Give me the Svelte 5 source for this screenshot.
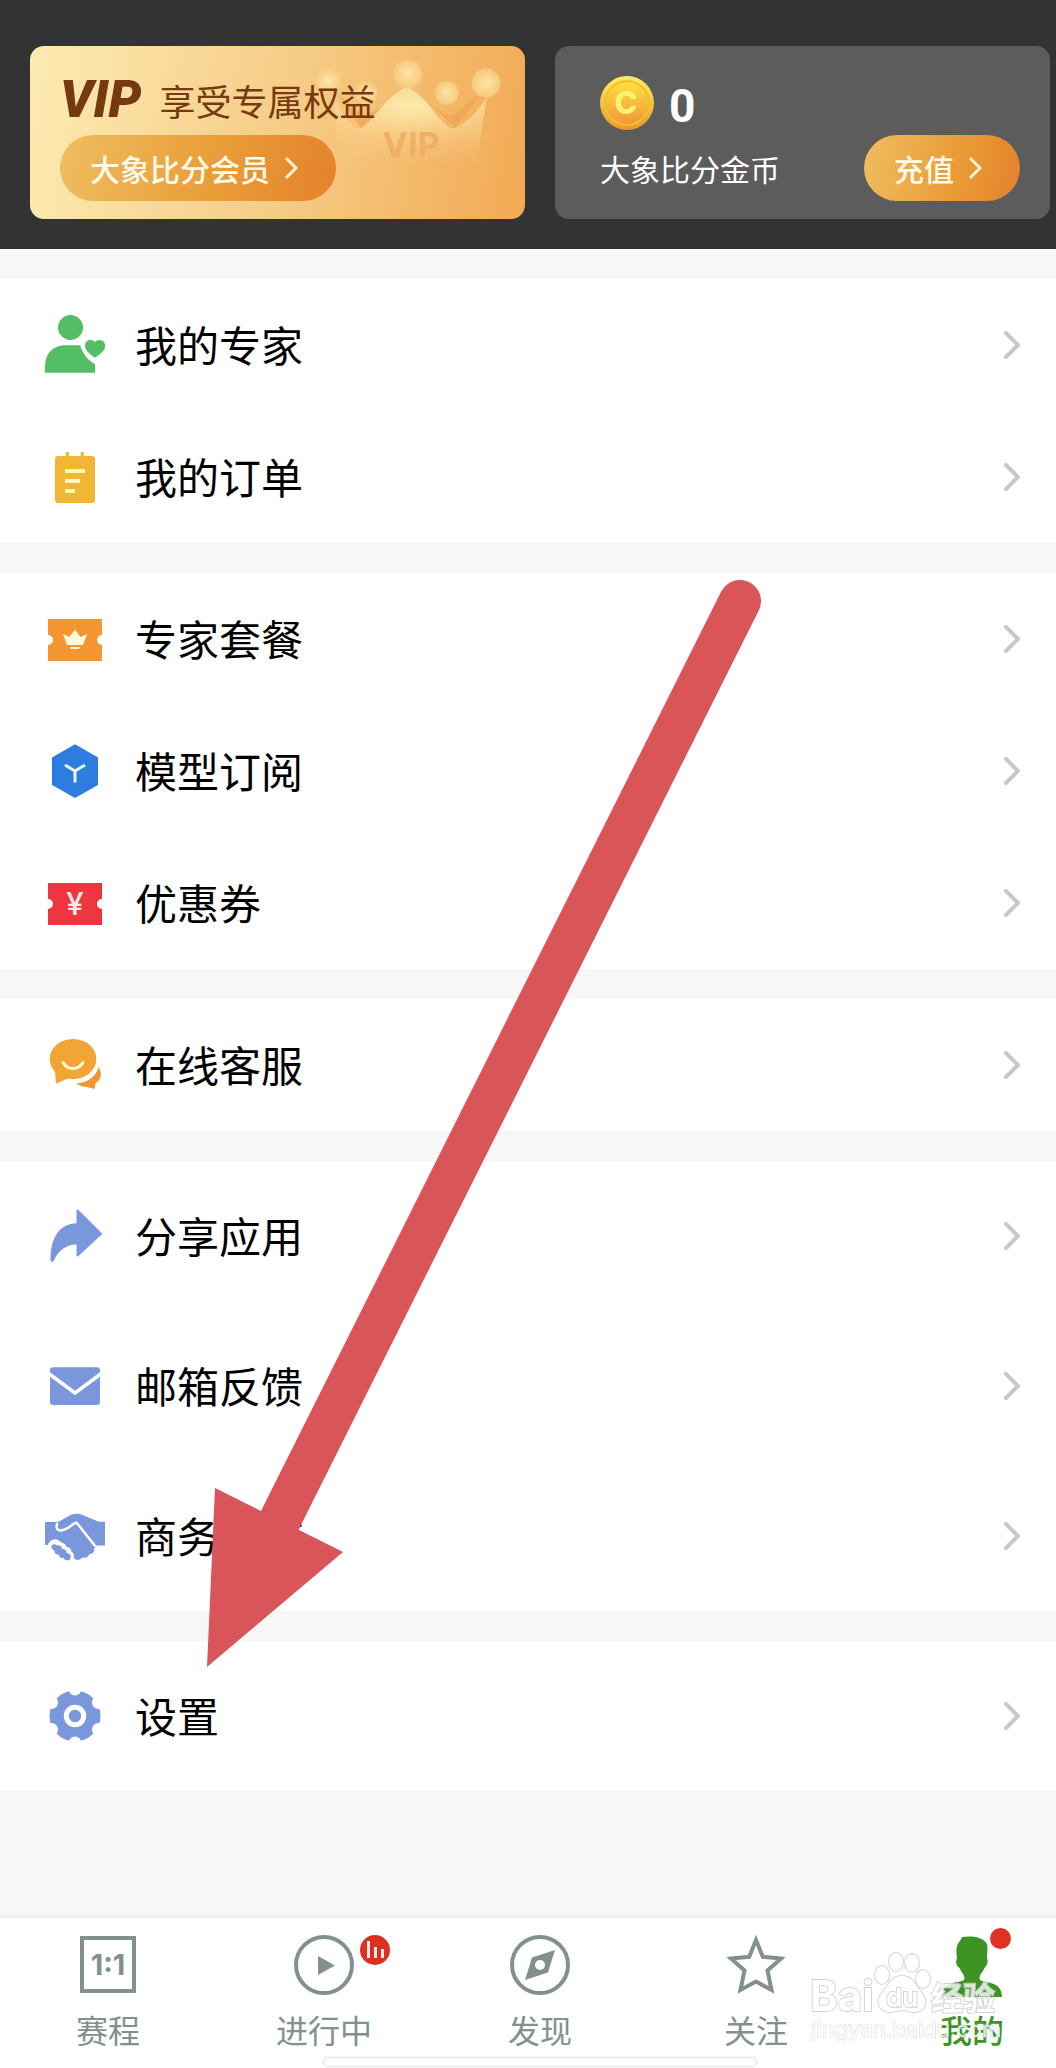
<script lang="ts">
    type Item = { icon: string; label: string };

    const groups: { items: Item[]; tall?: boolean }[] = [
        {
            items: [
                { icon: "expert", label: "我的专家" },
                { icon: "order", label: "我的订单" }
            ]
        },
        {
            items: [
                { icon: "package", label: "专家套餐" },
                { icon: "model", label: "模型订阅" },
                { icon: "coupon", label: "优惠券" }
            ]
        },
        { items: [{ icon: "service", label: "在线客服" }] },
        {
            tall: true,
            items: [
                { icon: "share", label: "分享应用" },
                { icon: "mail", label: "邮箱反馈" },
                { icon: "business", label: "商务合作" }
            ]
        },
        { tall: true, items: [{ icon: "settings", label: "设置" }] }
    ];

    const tabs: Item[] = [
        { icon: "schedule", label: "赛程" },
        { icon: "live", label: "进行中" },
        { icon: "discover", label: "发现" },
        { icon: "follow", label: "关注" },
        { icon: "mine", label: "我的" }
    ];

    let active = $state("mine");

    // gaps between the teeth of the settings gear
    const notches = [30, 90, 150, 210, 270, 330].map((deg) => ({
        x: 30 + 27 * Math.cos((deg * Math.PI) / 180),
        y: 30 + 27 * Math.sin((deg * Math.PI) / 180)
    }));
</script>

{#snippet pillArrow()}
    <svg class="pill-arrow" viewBox="0 0 14 24" aria-hidden="true">
        <path d="M2 2 L12 12 L2 22" fill="none" stroke="#fff3d2" stroke-width="3" />
    </svg>
{/snippet}

{#snippet rowIcon(name: string)}
    <svg class="row-icon" viewBox="0 0 60 60" aria-hidden="true">
        {#if name === "expert"}
            <g fill="#53be63">
                <circle cx="25.5" cy="12.5" r="12.5" />
                <path d="M0 57.7 V52 C0 38 8 30.3 21 30.3 H35 C38 39 43 46 50 49 V57.7 Z" />
                <path d="M50 42.7 C45 39.5 40 35.5 40 31 C40 24.5 47 23.5 50 27 C53 23.5 60.3 24.5 60.3 31 C60.3 35.5 55 39.5 50 42.7 Z" />
            </g>
        {:else if name === "order"}
            <rect x="10" y="9" width="40" height="47" rx="3" fill="#f1b734" />
            <path d="M22.3 5 V10 M37.3 5 V10" stroke="#f1b734" stroke-width="3" />
            <path d="M20 24 H40 M20 34 H35 M20 44 H30" stroke="#fffabb" stroke-width="4" />
        {:else if name === "package"}
            <path d="M3 10 H57 V26 A5 5 0 0 0 57 36 V52 H3 V36 A5 5 0 0 0 3 26 Z" fill="#f39630" />
            <path d="M18 25 L24.5 28 L30 20.5 L35.5 28 L42 25 L38 36 H22 Z M25 38 H35 L34 40 H26 Z" fill="#fffbe0" />
        {:else if name === "model"}
            <path d="M30 3.3 L53 16.5 V44 L30 57 L7 44 V16.5 Z" fill="#2d7de0" />
            <path d="M20 24 L30 30 L40 24 M30 30 V41.5" fill="none" stroke="#e6fbff" stroke-width="3" />
        {:else if name === "coupon"}
            <path d="M3 10 H57 V26 A5 5 0 0 0 57 36 V52 H3 V36 A5 5 0 0 0 3 26 Z" fill="#ee3640" />
            <text x="30" y="42" text-anchor="middle" font-size="31" font-weight="500" fill="#ffe9e4">¥</text>
        {:else if name === "service"}
            <g fill="#f2a435">
                <ellipse cx="28" cy="24" rx="23.3" ry="20" />
                <path d="M10 36 L11 48.5 L24 43 Z" />
                <path d="M53.5 32 C57 37 57 44 50.5 48.5 L49.5 54 L42 52 C38 51.5 34 51 31.5 48.5 C42 48 51 42 53.5 32 Z" fill="#ee962f" />
            </g>
            <path d="M18 27.5 C22.5 35.5 33.5 35.5 38 27.5" fill="none" stroke="#fffbd2" stroke-width="3" stroke-linecap="round" />
        {:else if name === "share"}
            <path
                d="M32.5 4.5 L56 27.7 L32.5 49.5 V37.5 C21 36.5 12 45 8 54 C7 55.5 6.5 55 6.5 53 C6 32 16 18 32.5 18 Z"
                fill="#7b97db"
                stroke="#7b97db"
                stroke-width="2"
                stroke-linejoin="round"
            />
        {:else if name === "mail"}
            <rect x="5" y="11.3" width="50" height="37.7" rx="3" fill="#7b97db" />
            <path d="M3 17 L30 37 L57 17" fill="none" stroke="#fff" stroke-width="3.5" />
        {:else if name === "business"}
            <g fill="#7b97db">
                <path d="M0 16 H13 L22 11 C26 8 30 7 35 8 L54 15.7 H60 V39.5 H52 L49 42.5 C50 46 47 48.5 44.5 48 C43 51.5 40 52.5 37.5 51.5 C35 54.5 31 54.5 28 52 L22 42 C16 34 9 31 5 39 H0 Z" />
                <path d="M7 43 C5 39 9 36.5 12 39.5 C15 38.5 17 40.5 17 43 C20 42.5 22 44.5 21.5 47 C25 47 26.5 50 25.5 52.5 C24 55.5 20 54.5 18.5 52 C15.5 52.5 14 50.5 13.5 48.5 C10 48.5 9 46 9.5 44.5 Z" />
            </g>
            <g fill="none" stroke="#fff" stroke-width="2.5">
                <path d="M12.5 17 C10.5 21.5 12 24.5 16 24.5 C23 24 26 18.5 31.5 16.5 L50.5 40.5" />
                <path d="M3.5 40 C6 33.5 12 33 15 38 C19 37.5 20 40 20.5 42 C24 42 25.5 44 25 46 C28 47.5 28.5 50 27 54" />
            </g>
        {:else}
            <circle cx="30" cy="30" r="25.5" fill="#7b97db" />
            {#each notches as n}
                <circle cx={n.x} cy={n.y} r="6.5" fill="#fff" />
            {/each}
            <circle cx="30" cy="30" r="8.7" fill="none" stroke="#fff" stroke-width="5" />
        {/if}
    </svg>
{/snippet}

{#snippet tabIcon(name: string)}
    <svg class="tab-icon" viewBox="0 0 60 60" aria-hidden="true">
        {#if name === "schedule"}
            <rect x="4" y="3" width="52" height="53" fill="none" stroke="currentColor" stroke-width="4" />
            <text class="score" x="30" y="40" text-anchor="middle" font-size="29" font-weight="700" fill="currentColor">1:1</text>
        {:else if name === "live"}
            <circle cx="30" cy="30" r="28" fill="none" stroke="currentColor" stroke-width="4" />
            <path d="M24 21 L41 30.5 L24 40 Z" fill="currentColor" />
        {:else if name === "discover"}
            <circle cx="30" cy="30" r="28" fill="none" stroke="currentColor" stroke-width="4" />
            <path d="M45 15 L38 37.5 L15 45 L22 22.5 Z" fill="currentColor" />
            <circle cx="30" cy="30" r="5" fill="#fff" />
        {:else if name === "follow"}
            <path
                d="M30 5 L36.8 21.8 L55 23.5 L41.5 35.5 L45.5 55 L30 46.5 L14.5 55 L18.5 35.5 L5 23.5 L23.2 21.8 Z"
                fill="none"
                stroke="currentColor"
                stroke-width="4"
            />
        {:else}
            <path
                d="M20 2 C28 1 40 1 45 9 C46 14 45 20 45 23 C46.5 26 45 31 42.5 33 C41 37 37 40 37.5 44 C39 49 60 44 60 62 H0 C0 44 21 49 22.5 44 C23 40 19 37 17.5 33 C14 31 13.5 26 15 23 C14 15 14 10 18 6 Z"
                fill="currentColor"
            />
        {/if}
    </svg>
{/snippet}

<div class="page">
    <header>
        <section class="card vip-card">
            <svg class="crown" viewBox="0 0 190 120" aria-hidden="true">
                <defs>
                    <radialGradient id="ball">
                        <stop offset="0" stop-color="#fce5a6" />
                        <stop offset="0.5" stop-color="#f9d890" />
                        <stop offset="1" stop-color="#f6c77e" />
                    </radialGradient>
                    <radialGradient id="crown" cx="0.5" cy="0.3" r="0.6">
                        <stop offset="0" stop-color="#fdebae" />
                        <stop offset="1" stop-color="#f7cb85" />
                    </radialGradient>
                    <linearGradient id="fade" x1="0" y1="0" x2="0" y2="1">
                        <stop offset="0.5" stop-color="#fff" />
                        <stop offset="1" stop-color="#000" />
                    </linearGradient>
                    <mask id="crown-mask">
                        <rect width="190" height="120" fill="url(#fade)" />
                    </mask>
                </defs>
                <path d="M22 48 L46 82 L66 62 L50 70 Z M166 48 L140 82 L120 62 L136 70 Z" fill="#efa04e" opacity="0.6" />
                <path
                    d="M18 50 C26 66 34 78 42 82 C54 86 68 50 92 41 C114 50 128 86 140 82 C150 77 164 66 172 50 L162 118 H24 Z"
                    fill="url(#crown)"
                    mask="url(#crown-mask)"
                />
                <g fill="url(#ball)">
                    <circle cx="13" cy="35" r="14" />
                    <circle cx="51" cy="47" r="12" />
                    <circle cx="93" cy="28" r="14.5" />
                    <circle cx="132" cy="47" r="12" />
                    <circle cx="171" cy="37" r="14.5" />
                </g>
                <text x="96" y="111" text-anchor="middle" font-size="34" font-weight="700" fill="#efb066">VIP</text>
            </svg>
            <h2><em>VIP</em><span>享受专属权益</span></h2>
            <button class="pill">大象比分会员{@render pillArrow()}</button>
        </section>

        <section class="card coin-card">
            <div class="balance">
                <svg class="coin" viewBox="0 0 54 54" aria-hidden="true">
                    <defs>
                        <linearGradient id="rim" x1="0" y1="0" x2="0" y2="1">
                            <stop offset="0" stop-color="#fff064" />
                            <stop offset="1" stop-color="#eb9629" />
                        </linearGradient>
                        <linearGradient id="face" x1="0" y1="0" x2="0" y2="1">
                            <stop offset="0" stop-color="#fde33c" />
                            <stop offset="1" stop-color="#f0953a" />
                        </linearGradient>
                    </defs>
                    <circle cx="27" cy="27" r="27" fill="url(#rim)" />
                    <circle cx="27" cy="27" r="22" fill="url(#face)" stroke="#f3bf2c" stroke-width="2" />
                    <text x="26" y="38" text-anchor="middle" font-size="31" font-weight="800" fill="#fff170">C</text>
                </svg>
                <strong>0</strong>
            </div>
            <div class="coin-line">
                <span>大象比分金币</span>
                <button class="pill">充值{@render pillArrow()}</button>
            </div>
        </section>
    </header>

    <main>
        {#each groups as group}
            <ul class={["group", { tall: group.tall }]}>
                {#each group.items as item}
                    <li>
                        <a href="#{item.icon}">
                            {@render rowIcon(item.icon)}
                            <span>{item.label}</span>
                            <svg class="chevron" viewBox="0 0 16 28" aria-hidden="true">
                                <path d="M2 2 L14 14 L2 26" />
                            </svg>
                        </a>
                    </li>
                {/each}
            </ul>
        {/each}
    </main>

    <nav>
        <div class="tabs">
            {#each tabs as tab}
                <button class={["tab", { active: active === tab.icon }]} onclick={() => (active = tab.icon)}>
                    <span class="tab-figure">
                        {@render tabIcon(tab.icon)}
                        {#if tab.icon === "live"}
                            <svg class="live-badge" viewBox="0 0 30 30" aria-hidden="true">
                                <circle cx="15" cy="15" r="15" fill="#dc3020" />
                                <path d="M8.5 6 V23 M15.5 12 V23 M22.5 14 V23" stroke="#ffe9e4" stroke-width="3" />
                            </svg>
                        {:else if tab.icon === "mine"}
                            <i class="dot"></i>
                        {/if}
                    </span>
                    <span>{tab.label}</span>
                </button>
            {/each}
        </div>
        <div class="home-bar"></div>
        <svg class="watermark" viewBox="0 0 200 100" aria-hidden="true">
            <g fill="#fff" stroke="#cccccc" stroke-width="2" paint-order="stroke" opacity="0.8">
                <text x="0" y="63" font-size="42" font-weight="700">Bai</text>
                <ellipse cx="72" cy="27" rx="7" ry="9" />
                <ellipse cx="86" cy="14" rx="7" ry="9" />
                <ellipse cx="102" cy="15" rx="7" ry="9" />
                <ellipse cx="113" cy="31" rx="7" ry="9" />
                <path d="M92 28 C103 28 106 38 112 45 C119 54 115 64 104 64 C98 64 96 62 92 62 C88 62 86 64 80 64 C69 64 65 54 72 45 C78 38 81 28 92 28 Z" />
                <text x="92" y="59" text-anchor="middle" font-size="26" font-weight="600">du</text>
                <text x="121" y="62" font-size="32" font-weight="700">经验</text>
                <text x="1" y="89" font-size="22" stroke-width="1">jingyan.baidu.com</text>
            </g>
        </svg>
    </nav>

    <svg class="pointer" viewBox="0 0 580 1100" aria-hidden="true">
        <path d="M540 21 L80 940" stroke="#da555a" stroke-width="42" stroke-linecap="round" />
        <path d="M7 1087 L15 908 L143 972 Z" fill="#da555a" />
    </svg>
</div>

<style>
    :global(body) {
        background: #f7f7f7;
    }

    .page {
        position: relative;
        display: flex;
        flex-direction: column;
        min-height: 100vh;
        overflow: hidden;
        background: #f7f7f7;
        color: #000;
        font-family: "Noto Sans CJK SC", sans-serif;
    }

    button {
        border: 0;
        background: none;
        font-family: inherit;
        cursor: pointer;
    }

    header {
        display: grid;
        grid-template-columns: 1fr 1fr;
        gap: 30px;
        padding: 46px 6px 30px 30px;
        background: #333;
    }

    .card {
        position: relative;
        display: flex;
        flex-direction: column;
        align-items: flex-start;
        justify-content: space-between;
        box-sizing: border-box;
        height: 173px;
        padding: 30px 30px 18px;
        border-radius: 14px;
    }

    .vip-card {
        background: linear-gradient(100deg, #fdebb2 0%, #f6cd88 50%, #f2a953 100%);
    }

    .crown {
        position: absolute;
        top: 0;
        right: 20px;
        width: 190px;
        height: 120px;
        font-family: Inter, sans-serif;
    }

    h2 {
        position: relative;
        display: flex;
        align-items: center;
        gap: 18px;
        margin: 0;
        color: #763a10;
        font-size: 36px;
        font-weight: 400;
        line-height: 48px;
    }

    h2 em {
        font-family: Roboto, sans-serif;
        font-size: 52px;
        font-weight: 900;
    }

    .pill {
        position: relative;
        display: flex;
        align-items: center;
        gap: 14px;
        height: 66px;
        padding: 0 38px 0 30px;
        border-radius: 33px;
        background: linear-gradient(100deg, #efbd60, #e99b36 60%, #e4822b);
        color: #fffbe8;
        font-size: 30px;
        font-weight: 500;
        white-space: nowrap;
    }

    .pill-arrow {
        width: 14px;
        height: 24px;
    }

    .coin-card {
        padding-left: 45px;
        background: #5c5c5c;
        color: #fff;
    }

    .balance {
        display: flex;
        align-items: center;
        gap: 15px;
        height: 54px;
    }

    .coin {
        width: 54px;
        height: 54px;
        font-family: Inter, sans-serif;
    }

    .balance strong {
        padding-top: 6px;
        font-family: Roboto, sans-serif;
        font-size: 46px;
        line-height: 54px;
    }

    .coin-line {
        display: flex;
        align-items: center;
        justify-content: space-between;
        width: 100%;
        font-size: 30px;
    }

    main {
        flex: 1;
        padding: 30px 0;
    }

    .group {
        margin: 0 0 30px;
        padding: 0;
        list-style: none;
        background: #fff;
    }

    .group a {
        display: flex;
        align-items: center;
        gap: 30px;
        height: 132px;
        padding: 0 36px 0 45px;
        color: inherit;
        font-size: 42px;
        text-decoration: none;
    }

    .group span {
        padding-bottom: 3px;
    }

    .group.tall a {
        height: 150px;
    }

    .row-icon {
        width: 60px;
        height: 60px;
        font-family: Inter, sans-serif;
    }

    .chevron {
        width: 16px;
        height: 28px;
        margin-left: auto;
        fill: none;
        stroke: #c8c8c8;
        stroke-width: 4px;
        stroke-linecap: round;
        stroke-linejoin: round;
    }

    nav {
        position: relative;
        height: 150px;
        background: #fff;
        box-shadow: 0 -1px 4px rgba(0, 0, 0, 0.08);
    }

    /* the last tab runs a little past the right edge */
    .tabs {
        display: grid;
        grid-template-columns: repeat(5, 1fr);
        margin-right: -24px;
    }

    .tab {
        display: flex;
        flex-direction: column;
        align-items: center;
        gap: 10px;
        padding: 17px 0 0;
        color: #829090;
        font-size: 32px;
        line-height: 48px;
    }

    .tab.active {
        color: #3d9423;
        font-weight: 500;
    }

    .tab-figure {
        position: relative;
        height: 60px;
    }

    .tab-icon {
        display: block;
        width: 60px;
        height: 60px;
        overflow: visible;
    }

    .score {
        font-family: Inter, sans-serif;
    }

    .live-badge {
        position: absolute;
        top: 0;
        left: 66px;
        width: 30px;
        height: 30px;
    }

    .dot {
        position: absolute;
        top: -7px;
        left: 48px;
        width: 21px;
        height: 21px;
        border-radius: 50%;
        background: #e03324;
    }

    .home-bar {
        position: absolute;
        bottom: 2px;
        left: 50%;
        width: 432px;
        height: 8px;
        margin-left: -204px;
        border-radius: 5px;
        background: #fff;
        box-shadow: 0 0 2px 1px #dcdcdc;
    }

    .watermark {
        position: absolute;
        right: 46px;
        bottom: 20px;
        width: 200px;
        height: 100px;
        font-family: Inter, "Noto Sans CJK SC", sans-serif;
        pointer-events: none;
    }

    .pointer {
        position: absolute;
        top: 580px;
        left: 200px;
        width: 580px;
        height: 1100px;
        pointer-events: none;
    }
</style>
